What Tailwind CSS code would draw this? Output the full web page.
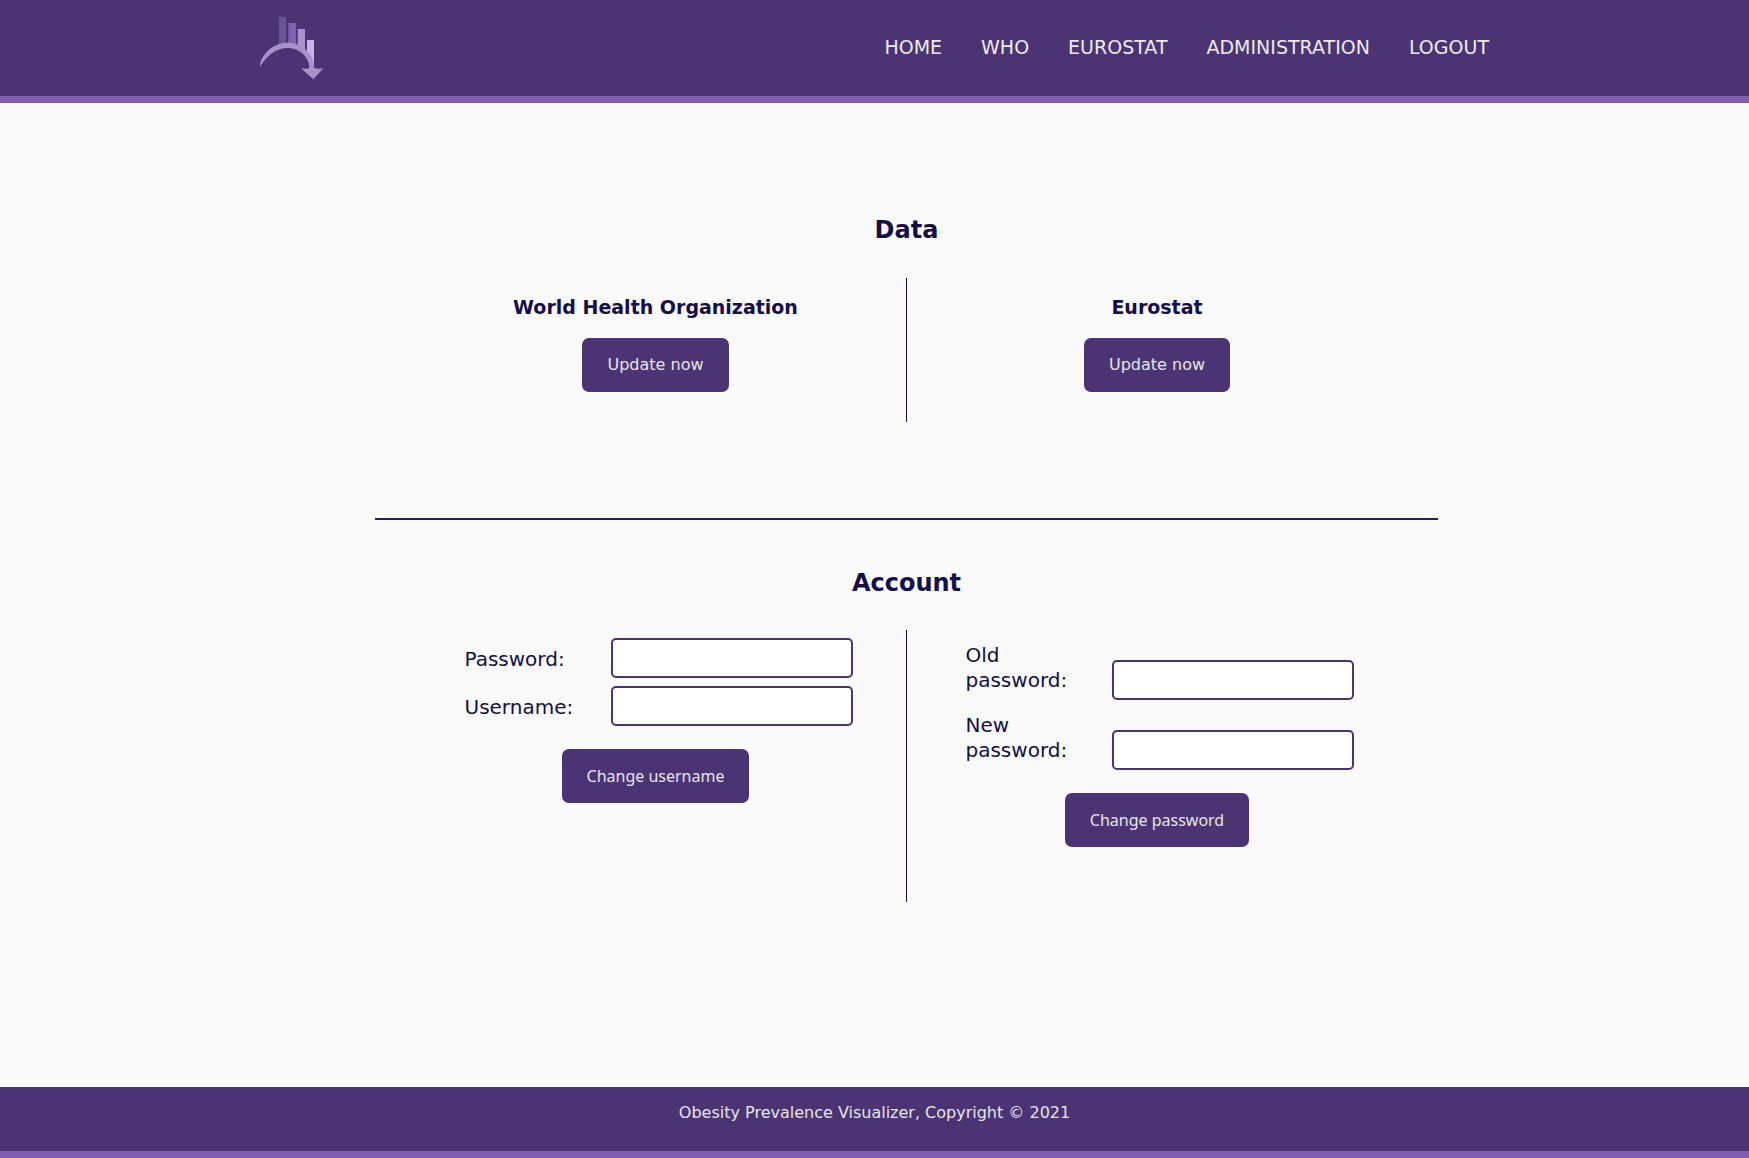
<!DOCTYPE html>
<html lang="en">
<head>
<meta charset="utf-8">
<meta name="viewport" content="width=device-width, initial-scale=1">
<title>Obesity Prevalence Visualizer</title>
<script src="https://cdn.jsdelivr.net/npm/@tailwindcss/browser@4"></script>
</head>
<body class="flex min-h-screen flex-col bg-[#fafafa] font-['DejaVu_Sans',sans-serif] text-[#150e4b]">
<header class="border-b-7 border-[#7f5db3] bg-[#4c3374]">
  <div class="mx-auto flex h-24 max-w-[1229px] items-center justify-between">
    <a href="#" aria-label="Obesity Prevalence Visualizer">
      <svg class="block h-[65px] w-[65px]" viewBox="60 48 195 195" aria-hidden="true">
        <rect x="117" y="51" width="21" height="85" fill="#69568c"/>
        <rect x="145" y="69" width="23" height="68" fill="#8061b6"/>
        <rect x="173" y="87" width="22" height="65" fill="#a992c9"/>
        <path d="M201 120H222V197L201 160Z" fill="#c7b3e8"/>
        <path d="M60 200C60 166 100 128 140 128C187 128 222 160 223 204Q238 208 251 204L220 238L182 204Q196 208 208 204C208 172 180 144 143 144C108 144 80 168 60 200Z" fill="#a992c9"/>
      </svg>
    </a>
    <nav aria-label="Main">
      <ul class="flex gap-[39px] pb-0.5 text-[19px] leading-6 text-[#ececec]">
        <li><a href="#">HOME</a></li>
        <li><a href="#">WHO</a></li>
        <li><a href="#">EUROSTAT</a></li>
        <li><a href="#">ADMINISTRATION</a></li>
        <li><a href="#">LOGOUT</a></li>
      </ul>
    </nav>
  </div>
</header>

<main class="flex-1 pt-[111px] pb-20 pl-16">
  <section class="mx-auto max-w-[1063px] border-b-2 border-[#2b1d5c] pb-24">
    <h2 class="text-center text-2xl leading-8 font-bold">Data</h2>
    <div class="mx-auto mt-8 grid min-h-36 max-w-[1002px] grid-cols-2 divide-x divide-[#150e4b]">
      <div class="flex flex-col items-center pt-[17px]">
        <h3 class="text-[19px] leading-6 font-bold">World Health Organization</h3>
        <button type="button" class="mt-[19px] h-[54px] rounded-[7px] bg-[#4c3374] px-[25px] text-base text-[#e6e6e6]">Update now</button>
      </div>
      <div class="flex flex-col items-center pt-[17px]">
        <h3 class="text-[19px] leading-6 font-bold">Eurostat</h3>
        <button type="button" class="mt-[19px] h-[54px] rounded-[7px] bg-[#4c3374] px-[25px] text-base text-[#e6e6e6]">Update now</button>
      </div>
    </div>
  </section>

  <section class="mx-auto max-w-[1063px] pt-[47px]">
    <h2 class="text-center text-2xl leading-8 font-bold">Account</h2>
    <div class="mx-auto mt-[31px] grid min-h-[272px] max-w-[1002px] grid-cols-2 divide-x divide-[#150e4b]">
      <form class="flex flex-col items-center pt-2">
        <div class="grid w-full grid-cols-[146px_242px] items-center gap-y-2 pl-[59px] text-xl leading-[25px]">
          <label for="password" class="pt-0.5 pr-8">Password:</label>
          <input id="password" type="password" class="h-10 w-full rounded-[5px] border-2 border-[#4c3374] bg-white px-2">
          <label for="username" class="pt-0.5 pr-8">Username:</label>
          <input id="username" type="text" class="h-10 w-full rounded-[5px] border-2 border-[#4c3374] bg-white px-2">
        </div>
        <button type="submit" class="mt-[23px] h-[54px] rounded-[7px] bg-[#4c3374] px-[25px] font-['Noto_Sans',sans-serif] text-base text-[#e6e6e6]">Change username</button>
      </form>
      <form class="flex flex-col items-center pt-[13px]">
        <div class="grid w-full auto-rows-[57px] grid-cols-[146px_242px] gap-y-[13px] pl-[59px] text-xl leading-[25px]">
          <label for="old-password" class="pr-8">Old password:</label>
          <input id="old-password" type="password" class="h-10 w-full self-end rounded-[5px] border-2 border-[#4c3374] bg-white px-2">
          <label for="new-password" class="pr-8">New password:</label>
          <input id="new-password" type="password" class="h-10 w-full self-end rounded-[5px] border-2 border-[#4c3374] bg-white px-2">
        </div>
        <button type="submit" class="mt-[23px] h-[54px] rounded-[7px] bg-[#4c3374] px-[25px] font-['Noto_Sans',sans-serif] text-base text-[#e6e6e6]">Change password</button>
      </form>
    </div>
  </section>
</main>

<footer class="border-b-7 border-[#7f5db3] bg-[#4c3374] pt-3.5 pb-[26px] text-center text-base leading-6 text-[#e6e6e6]">
  <p>Obesity Prevalence Visualizer, Copyright © 2021</p>
</footer>
</body>
</html>
